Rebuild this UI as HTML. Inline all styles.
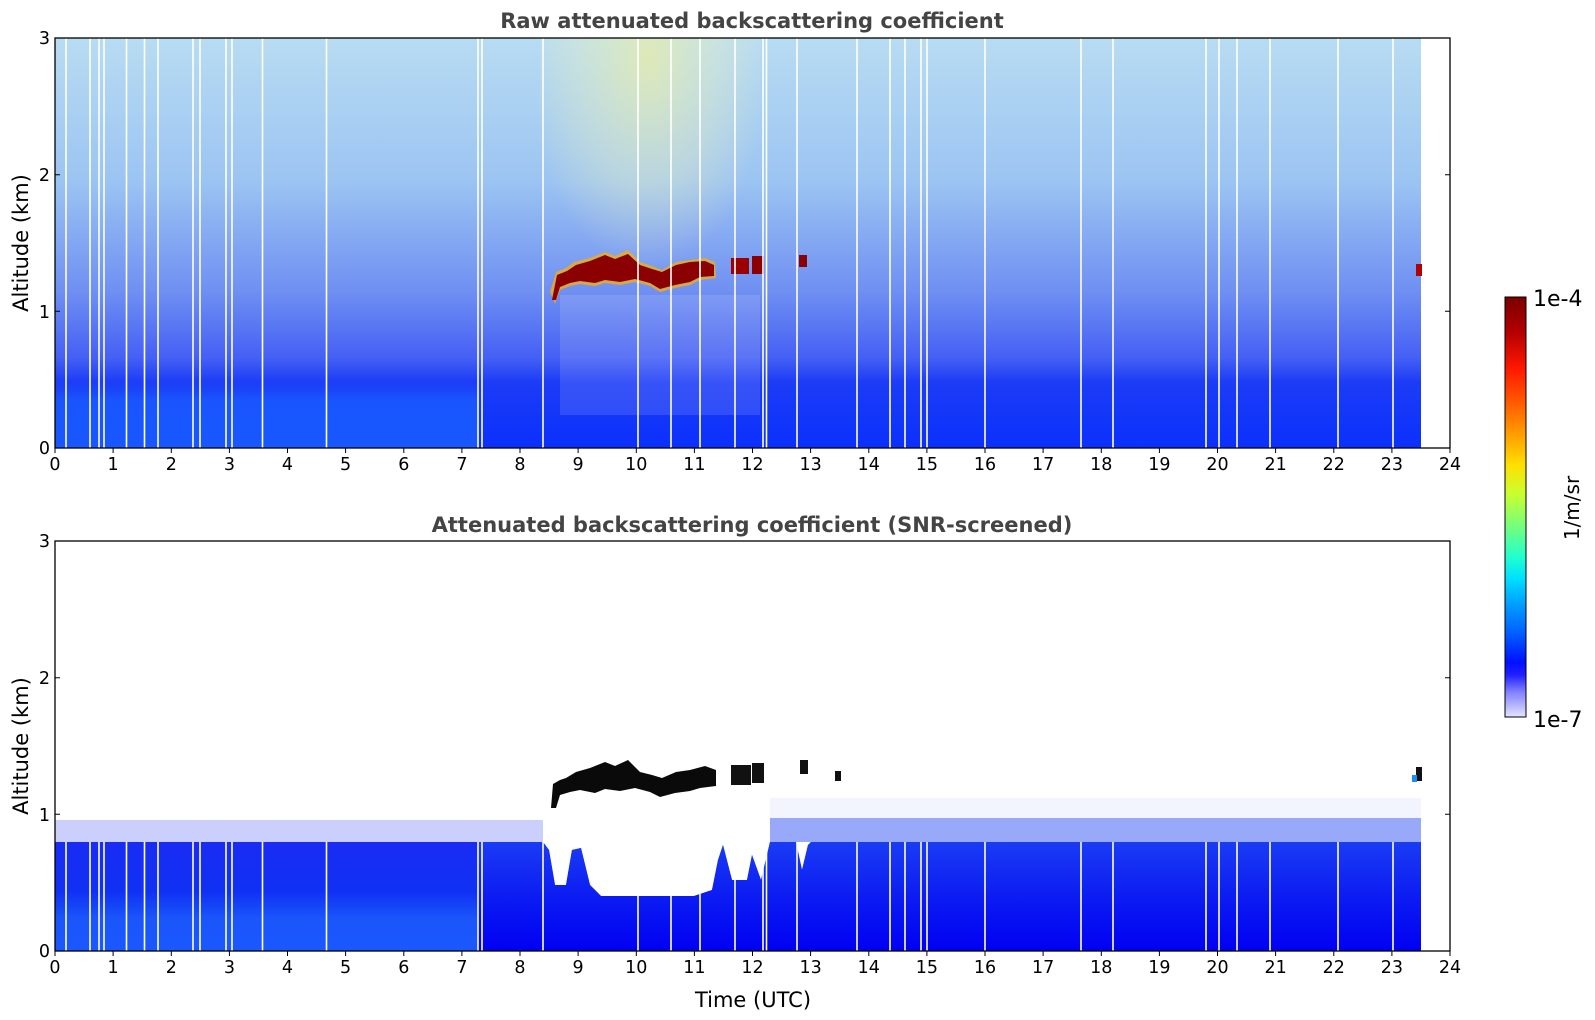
<!DOCTYPE html>
<html><head><meta charset="utf-8"><style>
html,body{margin:0;padding:0;background:#fff;}
svg{display:block;font-family:"DejaVu Sans","Liberation Sans",sans-serif;}
</style></head><body>
<svg width="1595" height="1020" viewBox="0 0 1595 1020" xmlns="http://www.w3.org/2000/svg">
<defs>
<linearGradient id="gTop" x1="0" y1="38" x2="0" y2="448" gradientUnits="userSpaceOnUse">
<stop offset="0" stop-color="#b8dcf2"/>
<stop offset="0.35" stop-color="#9cc4f2"/>
<stop offset="0.62" stop-color="#6f8ff2"/>
<stop offset="0.78" stop-color="#4560f4"/>
<stop offset="0.84" stop-color="#1c3cf6"/>
<stop offset="1" stop-color="#0a30fc"/>
</linearGradient>
<radialGradient id="gYel" cx="648" cy="60" r="150" gradientUnits="userSpaceOnUse" gradientTransform="translate(648 60) scale(0.8 1.4) translate(-648 -60)">
<stop offset="0" stop-color="#f0f0a0" stop-opacity="0.7"/>
<stop offset="0.6" stop-color="#e8f0c0" stop-opacity="0.35"/>
<stop offset="1" stop-color="#e8f0c0" stop-opacity="0"/>
</radialGradient>
<linearGradient id="gLeftTop" x1="0" y1="380" x2="0" y2="448" gradientUnits="userSpaceOnUse">
<stop offset="0" stop-color="#1a50ff" stop-opacity="0"/>
<stop offset="0.3" stop-color="#1a5cff" stop-opacity="0.8"/>
<stop offset="1" stop-color="#1a5cff" stop-opacity="0.9"/>
</linearGradient>
<linearGradient id="gBotL" x1="0" y1="842" x2="0" y2="951" gradientUnits="userSpaceOnUse">
<stop offset="0" stop-color="#1a2cf4"/>
<stop offset="0.45" stop-color="#1030f4"/>
<stop offset="0.7" stop-color="#1a55fa"/>
<stop offset="1" stop-color="#1a58ff"/>
</linearGradient>
<linearGradient id="gBotR" x1="0" y1="842" x2="0" y2="951" gradientUnits="userSpaceOnUse">
<stop offset="0" stop-color="#1a3cf4"/>
<stop offset="0.5" stop-color="#0c1cf2"/>
<stop offset="1" stop-color="#0000f2"/>
</linearGradient>
<linearGradient id="gCb" x1="0" y1="297" x2="0" y2="717" gradientUnits="userSpaceOnUse">
<stop offset="0" stop-color="#7a0000"/>
<stop offset="0.08" stop-color="#b00000"/>
<stop offset="0.17" stop-color="#ff1800"/>
<stop offset="0.25" stop-color="#ff5a00"/>
<stop offset="0.33" stop-color="#ffa000"/>
<stop offset="0.4" stop-color="#ffe000"/>
<stop offset="0.47" stop-color="#c8ff30"/>
<stop offset="0.55" stop-color="#70ff80"/>
<stop offset="0.62" stop-color="#20ffd0"/>
<stop offset="0.67" stop-color="#00e0ff"/>
<stop offset="0.73" stop-color="#00a0ff"/>
<stop offset="0.8" stop-color="#0060ff"/>
<stop offset="0.87" stop-color="#0010ff"/>
<stop offset="0.9" stop-color="#2020ff"/>
<stop offset="0.94" stop-color="#8080ff"/>
<stop offset="1" stop-color="#e4e4ff"/>
</linearGradient>
</defs>

<!-- ===== TOP PLOT ===== -->
<text x="752" y="28" text-anchor="middle" font-weight="bold" font-size="21" fill="#444">Raw attenuated backscattering coefficient</text>
<rect x="55" y="38" width="1366" height="410" fill="url(#gTop)"/>
<rect x="55" y="38" width="424" height="410" fill="url(#gLeftTop)"/>
<rect x="540" y="38" width="220" height="260" fill="url(#gYel)"/>
<rect x="560" y="295" width="200" height="120" fill="#fff" opacity="0.12"/>
<!-- red cloud -->
<g>
<path d="M550,292 L556,272 L566,268 L574,262 L590,258 L605,252 L615,256 L628,250 L640,262 L652,266 L662,270 L676,262 L690,260 L705,258 L715,262 L716,278 L700,280 L690,285 L675,288 L660,292 L650,286 L635,282 L620,285 L605,283 L595,286 L580,284 L570,286 L560,290 L555,304 Z" fill="#ffb000" opacity="0.7"/>
<path d="M552,300 L557,275 L567,271 L576,265 L590,261 L605,255 L615,259 L628,254 L640,265 L652,269 L662,272 L676,265 L690,262 L705,261 L714,265 L714,276 L700,277 L690,282 L675,285 L660,289 L650,283 L635,279 L620,282 L605,280 L595,283 L580,281 L570,283 L560,287 L556,300 Z" fill="#8b0000"/>
<rect x="731" y="258" width="18" height="16" fill="#9a0000"/>
<rect x="752" y="256" width="12" height="18" fill="#8b0000"/>
<rect x="799" y="255" width="8" height="12" fill="#8b0000"/>
<rect x="1416" y="264" width="6" height="12" fill="#b00000"/>
</g>
<!-- white stripes top -->
<g stroke="#fff" stroke-width="1.6">
<line x1="66" y1="38" x2="66" y2="448"/><line x1="90" y1="38" x2="90" y2="448"/><line x1="99" y1="38" x2="99" y2="448"/><line x1="104" y1="38" x2="104" y2="448"/>
<line x1="126.5" y1="38" x2="126.5" y2="448"/><line x1="144.5" y1="38" x2="144.5" y2="448"/><line x1="158" y1="38" x2="158" y2="448"/><line x1="193" y1="38" x2="193" y2="448"/>
<line x1="200" y1="38" x2="200" y2="448"/><line x1="226" y1="38" x2="226" y2="448"/><line x1="232" y1="38" x2="232" y2="448"/><line x1="262.5" y1="38" x2="262.5" y2="448"/>
<line x1="326.5" y1="38" x2="326.5" y2="448"/><line x1="478" y1="38" x2="478" y2="448"/><line x1="482" y1="38" x2="482" y2="448"/><line x1="543" y1="38" x2="543" y2="448"/>
<line x1="638" y1="38" x2="638" y2="448"/><line x1="671" y1="38" x2="671" y2="448"/><line x1="700" y1="38" x2="700" y2="448"/><line x1="735" y1="38" x2="735" y2="448"/>
<line x1="763" y1="38" x2="763" y2="448"/><line x1="766.5" y1="38" x2="766.5" y2="448"/><line x1="797" y1="38" x2="797" y2="448"/><line x1="857" y1="38" x2="857" y2="448"/>
<line x1="890" y1="38" x2="890" y2="448"/><line x1="905" y1="38" x2="905" y2="448"/><line x1="921" y1="38" x2="921" y2="448"/><line x1="927" y1="38" x2="927" y2="448"/>
<line x1="985" y1="38" x2="985" y2="448"/><line x1="1081" y1="38" x2="1081" y2="448"/><line x1="1113" y1="38" x2="1113" y2="448"/><line x1="1206" y1="38" x2="1206" y2="448"/>
<line x1="1219" y1="38" x2="1219" y2="448"/><line x1="1237" y1="38" x2="1237" y2="448"/><line x1="1270" y1="38" x2="1270" y2="448"/><line x1="1338" y1="38" x2="1338" y2="448"/>
<line x1="1393" y1="38" x2="1393" y2="448"/>
</g>
<rect x="55" y="38" width="1395" height="410" fill="none" stroke="#000" stroke-width="1.3"/>

<!-- ===== BOTTOM PLOT ===== -->
<text x="752" y="532" text-anchor="middle" font-weight="bold" font-size="21" fill="#444">Attenuated backscattering coefficient (SNR-screened)</text>
<rect x="55" y="820" width="488" height="22" fill="#2a40f4" opacity="0.25"/>
<rect x="770" y="818" width="651" height="24" fill="#1a40f4" opacity="0.45"/>
<rect x="770" y="798" width="651" height="20" fill="#2a40f4" opacity="0.06"/>
<path d="M55,951 L55,842 L543,842 L549,850 L555,885 L566,885 L572,850 L581,848 L590,885 L601,896 L694,896 L712,890 L718,860 L723,845 L732,880 L747,880 L752,855 L761,880 L770,842 L796,842 L802,870 L808,845 L811,842 L811,951 Z" fill="url(#gBotL)"/>
<path d="M478,951 L478,842 L543,842 L549,850 L555,885 L566,885 L572,850 L581,848 L590,885 L601,896 L694,896 L712,890 L718,860 L723,845 L732,880 L747,880 L752,855 L761,880 L770,842 L796,842 L802,870 L808,845 L811,842 L1421,842 L1421,951 Z" fill="url(#gBotR)"/>
<!-- black cloud -->
<path d="M551,808 L553,784 L560,780 L566,778 L576,772 L590,768 L605,762 L615,766 L628,760 L640,772 L652,775 L662,778 L676,772 L690,770 L705,766 L716,770 L716,786 L700,788 L690,791 L675,793 L660,797 L650,792 L635,788 L620,791 L605,789 L595,793 L580,790 L570,792 L560,795 L556,808 Z" fill="#0a0a0a"/>
<rect x="731" y="765" width="20" height="20" fill="#111"/>
<rect x="752" y="763" width="12" height="20" fill="#111"/>
<rect x="800" y="760" width="8" height="14" fill="#111"/>
<rect x="835" y="771" width="6" height="10" fill="#111"/>
<rect x="1416" y="767" width="6" height="14" fill="#111"/>
<rect x="1412" y="775" width="5" height="7" fill="#1a8cff"/>
<g stroke="#fff" stroke-width="1.6">
<line x1="66" y1="842" x2="66" y2="951"/><line x1="90" y1="842" x2="90" y2="951"/><line x1="99" y1="842" x2="99" y2="951"/><line x1="104" y1="842" x2="104" y2="951"/>
<line x1="126.5" y1="842" x2="126.5" y2="951"/><line x1="144.5" y1="842" x2="144.5" y2="951"/><line x1="158" y1="842" x2="158" y2="951"/><line x1="193" y1="842" x2="193" y2="951"/>
<line x1="200" y1="842" x2="200" y2="951"/><line x1="226" y1="842" x2="226" y2="951"/><line x1="232" y1="842" x2="232" y2="951"/><line x1="262.5" y1="842" x2="262.5" y2="951"/>
<line x1="326.5" y1="842" x2="326.5" y2="951"/><line x1="478" y1="842" x2="478" y2="951"/><line x1="482" y1="842" x2="482" y2="951"/><line x1="543" y1="842" x2="543" y2="951"/>
<line x1="638" y1="842" x2="638" y2="951"/><line x1="671" y1="842" x2="671" y2="951"/><line x1="700" y1="842" x2="700" y2="951"/><line x1="735" y1="842" x2="735" y2="951"/>
<line x1="763" y1="842" x2="763" y2="951"/><line x1="766.5" y1="842" x2="766.5" y2="951"/><line x1="797" y1="842" x2="797" y2="951"/><line x1="857" y1="842" x2="857" y2="951"/>
<line x1="890" y1="842" x2="890" y2="951"/><line x1="905" y1="842" x2="905" y2="951"/><line x1="921" y1="842" x2="921" y2="951"/><line x1="927" y1="842" x2="927" y2="951"/>
<line x1="985" y1="842" x2="985" y2="951"/><line x1="1081" y1="842" x2="1081" y2="951"/><line x1="1113" y1="842" x2="1113" y2="951"/><line x1="1206" y1="842" x2="1206" y2="951"/>
<line x1="1219" y1="842" x2="1219" y2="951"/><line x1="1237" y1="842" x2="1237" y2="951"/><line x1="1270" y1="842" x2="1270" y2="951"/><line x1="1338" y1="842" x2="1338" y2="951"/>
<line x1="1393" y1="842" x2="1393" y2="951"/>
</g>
<rect x="55" y="541" width="1395" height="410" fill="none" stroke="#000" stroke-width="1.3"/>

<!-- ===== TICKS ===== -->
<g stroke="#000" stroke-width="1">
<path d="M55,448v5M113.1,448v5M171.3,448v5M229.4,448v5M287.5,448v5M345.6,448v5M403.8,448v5M461.9,448v5M520,448v5M578.1,448v5M636.3,448v5M694.4,448v5M752.5,448v5M810.6,448v5M868.8,448v5M926.9,448v5M985,448v5M1043.1,448v5M1101.3,448v5M1159.4,448v5M1217.5,448v5M1275.6,448v5M1333.8,448v5M1391.9,448v5M1450,448v5"/>
<path d="M55,951v5M113.1,951v5M171.3,951v5M229.4,951v5M287.5,951v5M345.6,951v5M403.8,951v5M461.9,951v5M520,951v5M578.1,951v5M636.3,951v5M694.4,951v5M752.5,951v5M810.6,951v5M868.8,951v5M926.9,951v5M985,951v5M1043.1,951v5M1101.3,951v5M1159.4,951v5M1217.5,951v5M1275.6,951v5M1333.8,951v5M1391.9,951v5M1450,951v5"/>
<path d="M55,174.7h5M55,311.3h5M1450,174.7h-5M1450,311.3h-5M55,677.7h5M55,814.3h5M1450,677.7h-5M1450,814.3h-5"/>
</g>
<g font-size="17.5" fill="#000" text-anchor="middle">
<text x="55" y="470">0</text><text x="113.1" y="470">1</text><text x="171.3" y="470">2</text><text x="229.4" y="470">3</text><text x="287.5" y="470">4</text><text x="345.6" y="470">5</text><text x="403.8" y="470">6</text><text x="461.9" y="470">7</text><text x="520" y="470">8</text><text x="578.1" y="470">9</text><text x="636.3" y="470">10</text><text x="694.4" y="470">11</text><text x="752.5" y="470">12</text><text x="810.6" y="470">13</text><text x="868.8" y="470">14</text><text x="926.9" y="470">15</text><text x="985" y="470">16</text><text x="1043.1" y="470">17</text><text x="1101.3" y="470">18</text><text x="1159.4" y="470">19</text><text x="1217.5" y="470">20</text><text x="1275.6" y="470">21</text><text x="1333.8" y="470">22</text><text x="1391.9" y="470">23</text><text x="1450" y="470">24</text>
<text x="55" y="973">0</text><text x="113.1" y="973">1</text><text x="171.3" y="973">2</text><text x="229.4" y="973">3</text><text x="287.5" y="973">4</text><text x="345.6" y="973">5</text><text x="403.8" y="973">6</text><text x="461.9" y="973">7</text><text x="520" y="973">8</text><text x="578.1" y="973">9</text><text x="636.3" y="973">10</text><text x="694.4" y="973">11</text><text x="752.5" y="973">12</text><text x="810.6" y="973">13</text><text x="868.8" y="973">14</text><text x="926.9" y="973">15</text><text x="985" y="973">16</text><text x="1043.1" y="973">17</text><text x="1101.3" y="973">18</text><text x="1159.4" y="973">19</text><text x="1217.5" y="973">20</text><text x="1275.6" y="973">21</text><text x="1333.8" y="973">22</text><text x="1391.9" y="973">23</text><text x="1450" y="973">24</text>
</g>
<g font-size="17.5" fill="#000" text-anchor="end">
<text x="50" y="44">3</text><text x="50" y="181">2</text><text x="50" y="318">1</text><text x="50" y="454">0</text>
<text x="50" y="547">3</text><text x="50" y="684">2</text><text x="50" y="821">1</text><text x="50" y="957">0</text>
</g>
<text transform="translate(28,243) rotate(-90)" text-anchor="middle" font-size="21">Altitude (km)</text>
<text transform="translate(28,746) rotate(-90)" text-anchor="middle" font-size="21">Altitude (km)</text>
<text x="753" y="1007" text-anchor="middle" font-size="21">Time (UTC)</text>

<!-- ===== COLORBAR ===== -->
<rect x="1505" y="297" width="21" height="420" fill="url(#gCb)" stroke="#000" stroke-width="1"/>
<text x="1533" y="306" font-size="22">1e-4</text>
<text x="1533" y="727" font-size="22">1e-7</text>
<text transform="translate(1579,508) rotate(-90)" text-anchor="middle" font-size="20">1/m/sr</text>
</svg>
</body></html>
